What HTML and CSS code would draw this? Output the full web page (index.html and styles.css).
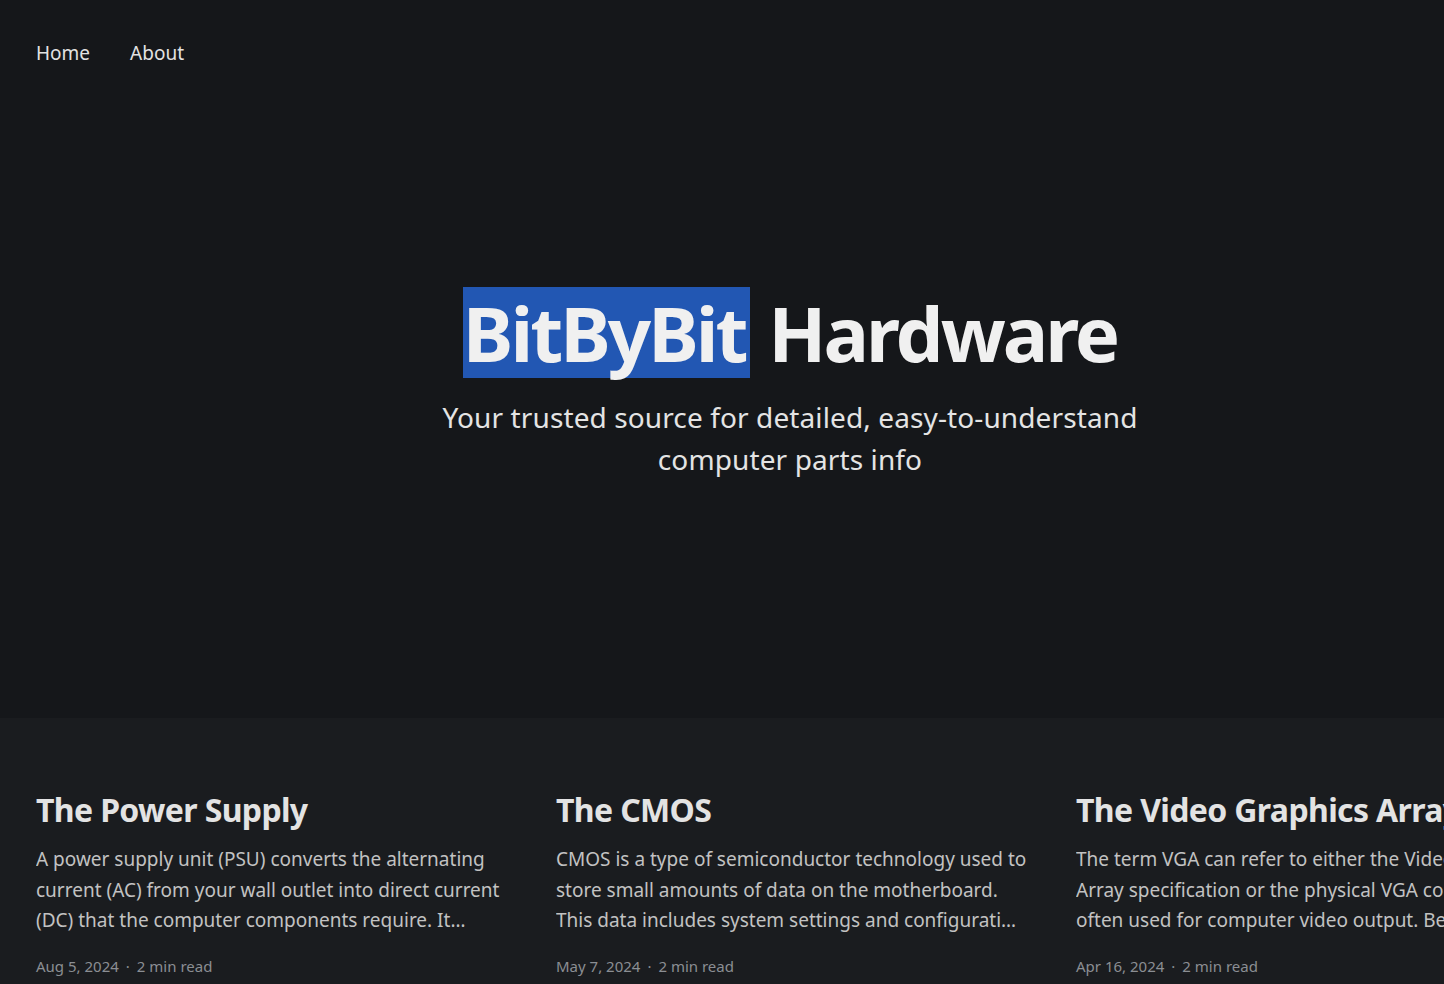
FILE: index.html
```html
<!DOCTYPE html>
<html lang="en">
<head>
<meta charset="utf-8">
<title>BitByBit Hardware</title>
<link rel="stylesheet" href="styles.css">
</head>
<body>
<div class="page">
  <header class="site-nav">
    <a class="nav-link" href="#">Home</a>
    <a class="nav-link" href="#">About</a>
  </header>
  <section class="hero">
    <h1 class="hero-title"><span class="sel">BitByBit</span> Hardware</h1>
    <p class="hero-desc">Your trusted source for detailed, easy-to-understand<br>computer parts info</p>
  </section>
  <main class="feed">
    <article class="card">
      <h2 class="card-title">The Power Supply</h2>
      <p class="card-excerpt">A power supply unit (PSU) converts the alternating current (AC) from your wall outlet into direct current (DC) that the computer components require. It…</p>
      <div class="card-meta"><span>Aug 5, 2024</span><span class="dot">·</span><span>2 min read</span></div>
    </article>
    <article class="card">
      <h2 class="card-title">The CMOS</h2>
      <p class="card-excerpt">CMOS is a type of semiconductor technology used to store small amounts of data on the motherboard. This data includes system settings and configurati…</p>
      <div class="card-meta"><span>May 7, 2024</span><span class="dot">·</span><span>2 min read</span></div>
    </article>
    <article class="card">
      <h2 class="card-title">The Video Graphics Array</h2>
      <p class="card-excerpt">The term VGA can refer to either the Video Graphics Array specification or the physical VGA connector often used for computer video output. Below is an overview of both.</p>
      <div class="card-meta"><span>Apr 16, 2024</span><span class="dot">·</span><span>2 min read</span></div>
    </article>
  </main>
</div>
</body>
</html>
```

FILE: styles.css
```css
html, body {
  margin: 0;
  padding: 0;
  background: #15171a;
  overflow: hidden;
}
body {
  font-family: "Noto Sans", "DejaVu Sans", sans-serif;
  color: #e6e6e6;
}
.page {
  width: 1580px;
  height: 984px;
  display: flex;
  flex-direction: column;
}
.site-nav {
  display: flex;
  gap: 40px;
  padding: 38px 36px 0;
  height: 68px;
}
.nav-link {
  color: #e2e2e2;
  text-decoration: none;
  font-size: 19px;
  line-height: 30px;
}
.hero {
  height: 612px;
  text-align: center;
  padding-top: 181px;
  box-sizing: border-box;
}
.hero-title {
  margin: 0;
  font-size: 76px;
  font-weight: 700;
  line-height: 91px;
  letter-spacing: -0.039em;
  color: #f0f0f0;
}
.sel {
  background: #2257b3;
  display: inline-block;
  height: 91px;
  padding: 0 4px 0 0;
  margin-right: 2px;
}
.hero-desc {
  margin: 18px 0 0;
  font-size: 28px;
  line-height: 42px;
  letter-spacing: 0.004em;
  color: #e4e4e4;
}
.feed {
  flex: 1;
  background: #1a1c1f;
  display: grid;
  grid-template-columns: repeat(3, 472px);
  column-gap: 48px;
  padding: 70px 36px 0;
}
.card-title {
  margin: 0;
  font-size: 32px;
  font-weight: 700;
  line-height: 44px;
  letter-spacing: -0.02em;
  color: #e3e3e3;
  white-space: nowrap;
}
.card-excerpt {
  margin: 12px 0 0;
  font-size: 19px;
  line-height: 30.5px;
  color: #c2c2c2;
  display: -webkit-box;
  -webkit-line-clamp: 3;
  -webkit-box-orient: vertical;
  overflow: hidden;
}
.card-meta {
  margin-top: 20px;
  font-size: 15px;
  color: #8b8e93;
  display: flex;
}
.dot {
  margin: 0 7px;
}
```
